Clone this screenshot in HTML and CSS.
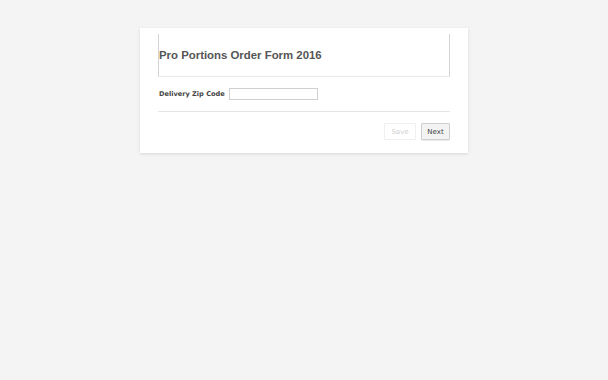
FILE: index.html
```html
<!DOCTYPE html>
<html>
<head>
<meta charset="utf-8">
<link rel="stylesheet" href="styles.css">
</head>
<body>
<div class="card">
  <div class="header">
    <h1 class="title">Pro Portions Order Form 2016</h1>
  </div>
  <div class="field">
    <label class="label">Delivery Zip Code</label>
    <input class="input" type="text">
  </div>
  <div class="rule"></div>
  <div class="actions">
    <button class="btn btn-save">Save</button>
    <button class="btn btn-next">Next</button>
  </div>
</div>
</body>
</html>
```
FILE: styles.css
```css
html, body {
  margin: 0;
  padding: 0;
  background: #f4f4f4;
  height: 100%;
}
body {
  padding-top: 28px;
  box-sizing: border-box;
}
.card {
  margin-left: 140px;
  width: 328px;
  height: 125px;
  box-sizing: border-box;
  background: #fff;
  padding: 6px 18px 0 18px;
  box-shadow: 0 1px 3px rgba(0,0,0,0.12);
}
.header {
  height: 43px;
  box-sizing: border-box;
  border-left: 1px solid #d4d4d4;
  border-right: 1px solid #d4d4d4;
  border-bottom: 1px solid #eaeaea;
  display: flex;
  align-items: center;
  padding-left: 0;
  padding-bottom: 1px;
}
.title {
  margin: 0;
  font-family: "Liberation Sans", Arial, sans-serif;
  font-weight: bold;
  font-size: 11.4px;
  color: #555;
}
.field {
  display: flex;
  align-items: center;
  margin-top: 11px;
  padding-left: 1px;
}
.label {
  font-family: "DejaVu Sans", Verdana, sans-serif;
  font-weight: bold;
  font-size: 6.6px;
  color: #444;
  margin-right: 4px;
}
.input {
  width: 89px;
  height: 12px;
  box-sizing: border-box;
  border: 1px solid #d0d0d0;
  padding: 0;
  margin: 0;
  background: #fff;
}
.rule {
  margin-top: 11px;
  height: 1px;
  background: #e4e4e4;
}
.actions {
  display: flex;
  justify-content: flex-end;
  gap: 5px;
  margin-top: 11px;
}
.btn {
  font-family: "DejaVu Sans", Verdana, sans-serif;
  font-size: 7px;
  height: 17px;
  padding: 0;
  box-sizing: border-box;
  border-radius: 1px;
}
.btn-save {
  width: 32px;
  background: #fff;
  border: 1px solid #f0f0f0;
  color: #d0d0d0;
}
.btn-next {
  width: 29px;
  background: #f3f3f3;
  border: 1px solid #cfcfcf;
  color: #444;
  box-shadow: 0 1px 1px rgba(0,0,0,0.08);
}
```
